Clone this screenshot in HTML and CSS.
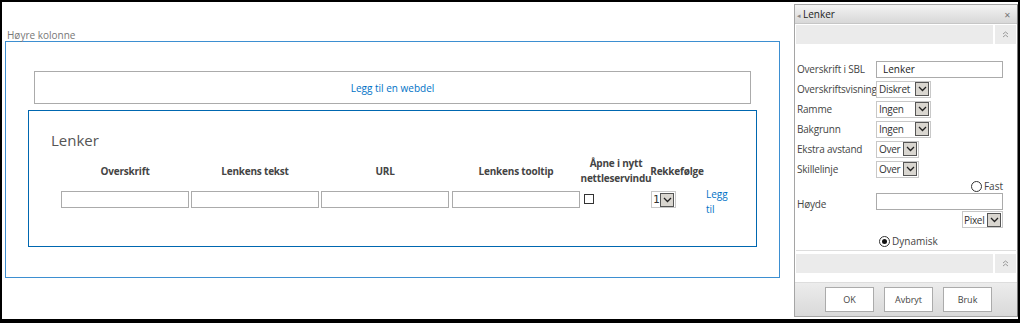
FILE: index.html
```html
<!DOCTYPE html>
<html lang="no">
<head>
    <meta charset="UTF-8">
    <title>Lenker - redigering</title>
    <link rel="stylesheet" href="styles.css">
</head>
<body>
    <div class="frame">
        <!-- Page area -->
        <main class="page">
            <div class="zone-title">Høyre kolonne</div>
            <div class="zone">
                <div class="add-part"><a href="#">Legg til en webdel</a></div>

                <div class="webpart">
                    <h2 class="webpart-title">Lenker</h2>
                    <div class="links-grid">
                        <div class="col-head">Overskrift</div>
                        <div class="col-head">Lenkens tekst</div>
                        <div class="col-head">URL</div>
                        <div class="col-head">Lenkens tooltip</div>
                        <div class="col-head">Åpne i nytt nettleservindu</div>
                        <div class="col-head">Rekkefølge</div>
                        <div></div>

                        <div class="cell"><span class="text-input"></span></div>
                        <div class="cell"><span class="text-input"></span></div>
                        <div class="cell"><span class="text-input"></span></div>
                        <div class="cell cell-wide"><span class="text-input"></span></div>
                        <div class="cell cell-check"><span class="checkbox"></span></div>
                        <div class="cell cell-order">
                            <span class="select select-small"><span class="select-value">1</span><span class="select-arrow"><svg width="9" height="6" viewBox="0 0 9 6"><polyline points="1,1 4.5,4.5 8,1" fill="none" stroke="#222" stroke-width="1.3"/></svg></span></span>
                        </div>
                        <div class="cell cell-link"><a href="#">Legg<br>til</a></div>
                    </div>
                </div>
            </div>
        </main>

        <!-- Tool pane -->
        <aside class="panel">
            <div class="panel-head">
                <span class="panel-title"><span class="caret">&#9666;</span>Lenker</span>
                <span class="panel-close">&#x2715;</span>
            </div>
            <div class="panel-bar">
                <span class="bar-fill"></span>
                <span class="bar-toggle"><svg width="7" height="7" viewBox="0 0 7 7"><polyline points="1,3 3.5,1 6,3" fill="none" stroke="#999" stroke-width="1"/><polyline points="1,6 3.5,4 6,6" fill="none" stroke="#999" stroke-width="1"/></svg></span>
            </div>

            <div class="panel-form">
                <div class="form-row">
                    <label>Overskrift i SBL</label>
                    <span class="text-input wide-input"><span class="input-value">Lenker</span></span>
                </div>
                <div class="form-row">
                    <label>Overskriftsvisning</label>
                    <span class="select select-mid"><span class="select-value">Diskret</span><span class="select-arrow"><svg width="9" height="6" viewBox="0 0 9 6"><polyline points="1,1 4.5,4.5 8,1" fill="none" stroke="#222" stroke-width="1.3"/></svg></span></span>
                </div>
                <div class="form-row">
                    <label>Ramme</label>
                    <span class="select select-mid"><span class="select-value">Ingen</span><span class="select-arrow"><svg width="9" height="6" viewBox="0 0 9 6"><polyline points="1,1 4.5,4.5 8,1" fill="none" stroke="#222" stroke-width="1.3"/></svg></span></span>
                </div>
                <div class="form-row">
                    <label>Bakgrunn</label>
                    <span class="select select-mid"><span class="select-value">Ingen</span><span class="select-arrow"><svg width="9" height="6" viewBox="0 0 9 6"><polyline points="1,1 4.5,4.5 8,1" fill="none" stroke="#222" stroke-width="1.3"/></svg></span></span>
                </div>
                <div class="form-row">
                    <label>Ekstra avstand</label>
                    <span class="select select-short"><span class="select-value">Over</span><span class="select-arrow"><svg width="9" height="6" viewBox="0 0 9 6"><polyline points="1,1 4.5,4.5 8,1" fill="none" stroke="#222" stroke-width="1.3"/></svg></span></span>
                </div>
                <div class="form-row">
                    <label>Skillelinje</label>
                    <span class="select select-short"><span class="select-value">Over</span><span class="select-arrow"><svg width="9" height="6" viewBox="0 0 9 6"><polyline points="1,1 4.5,4.5 8,1" fill="none" stroke="#222" stroke-width="1.3"/></svg></span></span>
                </div>

                <div class="height-block">
                    <label>Høyde</label>
                    <div class="height-controls">
                        <span class="radio-line"><span class="radio"></span>Fast</span>
                        <span class="text-input wide-input"></span>
                        <span class="select select-unit"><span class="select-value">Pixel</span><span class="select-arrow"><svg width="9" height="6" viewBox="0 0 9 6"><polyline points="1,1 4.5,4.5 8,1" fill="none" stroke="#222" stroke-width="1.3"/></svg></span></span>
                    </div>
                </div>
                <div class="dynamic-line">
                    <span class="radio checked"></span>Dynamisk
                </div>
            </div>

            <div class="panel-bar panel-bar-lower">
                <span class="bar-fill"></span>
                <span class="bar-toggle"><svg width="7" height="7" viewBox="0 0 7 7"><polyline points="1,3 3.5,1 6,3" fill="none" stroke="#999" stroke-width="1"/><polyline points="1,6 3.5,4 6,6" fill="none" stroke="#999" stroke-width="1"/></svg></span>
            </div>

            <div class="panel-foot">
                <button class="btn">OK</button>
                <button class="btn">Avbryt</button>
                <button class="btn">Bruk</button>
            </div>
        </aside>
    </div>
</body>
</html>
```

FILE: styles.css
```css
* {
    margin: 0;
    padding: 0;
    box-sizing: border-box;
}

body {
    font-family: 'Open Sans', 'Noto Sans', sans-serif;
    font-size: 10px;
    color: #444;
    background: #000;
}

a {
    color: #0072c6;
    text-decoration: none;
}

.frame {
    width: 1020px;
    height: 323px;
    border: 2px solid #000;
    border-bottom-width: 4px;
    background: #fff;
    display: flex;
}

/* Page area */

.page {
    width: 792px;
    padding: 28px 0 0 3px;
}

.zone-title {
    color: #777;
    font-size: 10px;
    line-height: 11px;
    padding-left: 2px;
}

.zone {
    width: 775px;
    height: 237px;
    border: 1px solid #3d8fd1;
    padding: 29px 22px 0 22px;
}

.add-part {
    margin: 0 6px;
    height: 33px;
    border: 1px solid #ababab;
    display: flex;
    justify-content: center;
    align-items: center;
    font-size: 10px;
}

.webpart {
    margin-top: 6px;
    height: 137px;
    border: 1px solid #0067b0;
    padding: 20px 0 0 22px;
}

.webpart-title {
    font-weight: normal;
    font-size: 15px;
    line-height: 18px;
    color: #555;
    margin-bottom: 7px;
}

.links-grid {
    display: grid;
    grid-template-columns: 130px 130px 130px 132px 68px 54px 40px;
    margin-left: 9px;
    row-gap: 5px;
}

.col-head {
    font-weight: bold;
    font-size: 10px;
    line-height: 15px;
    color: #444;
    text-align: center;
    display: flex;
    align-items: center;
    justify-content: center;
    height: 30px;
    letter-spacing: -0.2px;
}

.cell {
    padding-left: 1px;
    height: 24px;
}

.cell-wide {
    padding-left: 2px;
}

.text-input {
    display: flex;
    align-items: center;
    width: 128px;
    height: 17px;
    border: 1px solid #ababab;
    background: #fff;
}

.cell-check {
    padding: 3px 0 0 2px;
}

.checkbox {
    display: block;
    width: 10px;
    height: 10px;
    border: 1px solid #333;
}

.cell-link {
    padding: 0 0 0 2px;
    font-size: 10px;
    line-height: 15px;
    margin-top: -4px;
}

.select {
    display: inline-flex;
    align-items: center;
    height: 17px;
    border: 1px solid #c8c8c8;
    background: #fff;
    padding-right: 1px;
}

.select-value {
    flex: 1;
    padding-left: 2px;
    font-size: 10px;
    letter-spacing: -0.3px;
    color: #333;
    white-space: nowrap;
}

.select-arrow {
    flex: none;
    width: 14px;
    height: 14px;
    border: 1px solid #555;
    background: #d9d6d0;
    display: flex;
    align-items: center;
    justify-content: center;
}

.select-small {
    width: 25px;
    font-family: 'DejaVu Sans Mono', monospace;
}

.select-small .select-value {
    font-size: 11px;
    padding-left: 1px;
    letter-spacing: 0;
}

/* Tool pane */

.panel {
    width: 224px;
    height: 313px;
    margin-top: 2px;
    border: 1px solid #a5a5a5;
    border-right-color: #777;
    display: flex;
    flex-direction: column;
}

.panel-head {
    height: 19px;
    background: linear-gradient(#f3f3f3, #d8d8d8);
    border-bottom: 1px solid #c6c6c6;
    display: flex;
    align-items: center;
    justify-content: space-between;
    padding: 0 6px 0 2px;
}

.panel-title {
    font-size: 10px;
    color: #222;
}

.caret {
    font-size: 7px;
    color: #888;
    margin-right: 2px;
}

.panel-close {
    font-size: 8px;
    color: #777;
}

.panel-bar {
    margin: 1px 1px 0 1px;
    height: 19px;
    display: flex;
}

.bar-fill {
    flex: 1;
    background: #ebebeb;
}

.bar-toggle {
    width: 21px;
    margin-left: 2px;
    background: #ebebeb;
    display: flex;
    align-items: center;
    justify-content: center;
}

.panel-form {
    padding: 15px 0 0 2px;
    height: 206px;
}

.form-row {
    display: flex;
    align-items: center;
    height: 20px;
}

.form-row label,
.height-block label {
    width: 79px;
    font-size: 10px;
    color: #444;
    white-space: nowrap;
    letter-spacing: -0.2px;
}

.wide-input {
    width: 127px;
}

.input-value {
    padding-left: 6px;
    font-size: 10px;
    color: #222;
}

.select-mid {
    width: 55px;
}

.select-short {
    width: 43px;
}

.select-unit {
    width: 41px;
}

.select-unit .select-value {
    padding-left: 1px;
}

.height-block {
    display: flex;
    align-items: center;
    margin-top: 1px;
}

.height-controls {
    display: flex;
    flex-direction: column;
    align-items: flex-end;
    gap: 1px;
}

.radio-line {
    display: flex;
    align-items: center;
    gap: 2px;
    font-size: 10px;
    height: 12px;
}

.radio {
    display: inline-block;
    width: 11px;
    height: 11px;
    border: 1px solid #333;
    border-radius: 50%;
    background: #fff;
    position: relative;
}

.radio.checked::after {
    content: '';
    position: absolute;
    left: 2px;
    top: 2px;
    width: 5px;
    height: 5px;
    border-radius: 50%;
    background: #111;
}

.dynamic-line {
    display: flex;
    align-items: center;
    gap: 2px;
    margin: 6px 0 0 82px;
    font-size: 10px;
}

.panel-bar-lower {
    border-top: 1px solid #ddd;
    padding-top: 3px;
    height: 23px;
    margin-top: 0;
}

.panel-foot {
    margin-top: 9px;
    flex: 1;
    border-top: 1px solid #ddd;
    background: linear-gradient(#ececec, #d9d9d9);
    display: flex;
    align-items: center;
    padding-left: 30px;
    gap: 10px;
}

.btn {
    width: 49px;
    height: 25px;
    background: #fff;
    border: 1px solid #ababab;
    font-family: 'Open Sans', 'Noto Sans', sans-serif;
    font-size: 9px;
    color: #444;
}
```
